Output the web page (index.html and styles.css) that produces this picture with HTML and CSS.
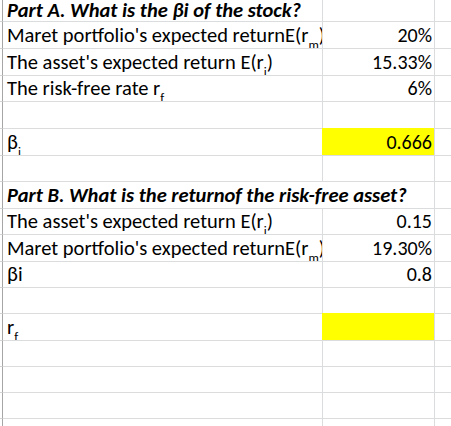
FILE: index.html
```html
<!DOCTYPE html>
<html>
<head>
<meta charset="utf-8">
<title>Sheet</title>
<link rel="stylesheet" href="styles.css">
</head>
<body>
<div class="sheet">
  <div class="row first"><div class="hd"></div><div class="a head">Part A. What is the βi of the stock?</div><div class="b"></div><div class="c"></div></div>
  <div class="row h27"><div class="hd"></div><div class="a">Maret portfolio's expected returnE(r<span class="sub">m</span>)</div><div class="b num">20%</div><div class="c"></div></div>
  <div class="row h27"><div class="hd"></div><div class="a">The asset's expected return E(r<span class="sub">i</span>)</div><div class="b num">15.33%</div><div class="c"></div></div>
  <div class="row h26"><div class="hd"></div><div class="a">The risk-free rate r<span class="sub">f</span></div><div class="b num">6%</div><div class="c"></div></div>
  <div class="row h27"><div class="hd"></div><div class="a"></div><div class="b"></div><div class="c"></div></div>
  <div class="row h27"><div class="hd"></div><div class="a">β<span class="sub">i</span></div><div class="b num yel">0.666</div><div class="c"></div></div>
  <div class="row h26"><div class="hd"></div><div class="a"></div><div class="b"></div><div class="c"></div></div>
  <div class="row h27"><div class="hd"></div><div class="a head span2">Part B. What is the returnof the risk-free asset?</div><div class="c"></div></div>
  <div class="row h26"><div class="hd"></div><div class="a">The asset's expected return E(r<span class="sub">i</span>)</div><div class="b num">0.15</div><div class="c"></div></div>
  <div class="row h27"><div class="hd"></div><div class="a">Maret portfolio's expected returnE(r<span class="sub">m</span>)</div><div class="b num">19.30%</div><div class="c"></div></div>
  <div class="row h26"><div class="hd"></div><div class="a">βi</div><div class="b num">0.8</div><div class="c"></div></div>
  <div class="row h26"><div class="hd"></div><div class="a"></div><div class="b"></div><div class="c"></div></div>
  <div class="row h27"><div class="hd"></div><div class="a">r<span class="sub">f</span></div><div class="b num yel"></div><div class="c"></div></div>
  <div class="row h26"><div class="hd"></div><div class="a"></div><div class="b"></div><div class="c"></div></div>
  <div class="row h26"><div class="hd"></div><div class="a"></div><div class="b"></div><div class="c"></div></div>
  <div class="row h26"><div class="hd"></div><div class="a"></div><div class="b"></div><div class="c"></div></div>
  <div class="row h27"><div class="hd"></div><div class="a"></div><div class="b"></div><div class="c"></div></div>
</div>
</body>
</html>
```
FILE: styles.css
```css
html, body {
  margin: 0;
  padding: 0;
  background: #ffffff;
}
body {
  width: 451px;
  height: 426px;
  overflow: hidden;
  font-family: Carlito, Calibri, "Liberation Sans", sans-serif;
  color: #000000;
}
.sheet {
  display: flex;
  flex-direction: column;
  width: 451px;
}
.row {
  display: grid;
  grid-template-columns: 2px 320px 112px 17px;
  flex: none;
}
.row.first { height: 21px; }
.h26 { height: 26px; }
.h27 { height: 27px; }
.row > div {
  box-sizing: border-box;
  border-top: 1px solid #dadcdd;
  border-left: 1px solid #dadcdd;
  display: flex;
  align-items: flex-end;
  white-space: nowrap;
  overflow-x: clip;
  overflow-y: visible;
  line-height: 20px;
  padding-bottom: 3px;
}
.row.first > div { border-top: none; }
.row > .hd { border-left: none; border-top-color: #d4d4d4; }
.row > .a {
  border-left-color: #a6a6a6;
  padding-left: 4px;
  font-size: 20.5px;
}
.a.span2 { grid-column: span 2; }
.head {
  font-weight: bold;
  font-style: italic;
  font-size: 20.4px;
}
.num {
  justify-content: flex-end;
  padding-right: 2px;
  font-size: 20px;
}
.row > .yel {
  background: #ffff00;
  border-color: #ffff00;
}
.sub {
  font-size: 13px;
  vertical-align: -2px;
  line-height: 0;
}
```
